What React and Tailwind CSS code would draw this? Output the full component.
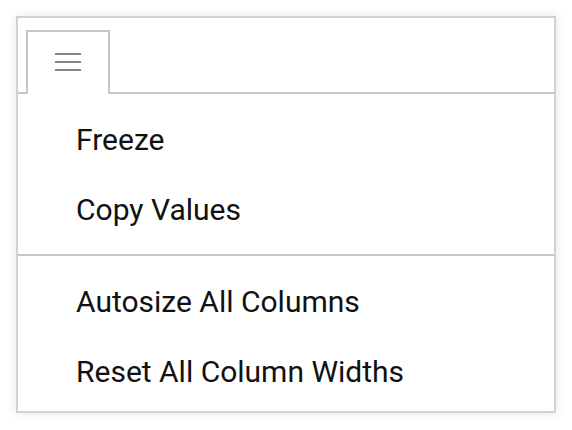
export default function App() {
  const line = 'border-[#c3c7cb]';
  const item = 'h-[70px] flex items-center pl-[58px] text-[30px] text-[#111111]';
  return (
    <div className="w-[572px] h-[430px] bg-white pt-[16px] pl-[16px]" style={{ fontFamily: 'Roboto, "Liberation Sans", sans-serif' }}>
      <div className="w-[540px] h-[397px] border-2 border-[#d2d2d2] bg-white shadow-[0_0_10px_rgba(0,0,0,0.1)] flex flex-col">
        {/* tab strip */}
        <div className={`flex pl-[8px] pt-[12px] border-b-2 ${line}`}>
          <div className={`w-[84px] h-[64px] -mb-[2px] border-2 border-b-0 ${line} bg-white flex flex-col items-center gap-[6px] pt-[21px]`}>
            <div className="w-[26px] h-[2px] bg-[#868686]" />
            <div className="w-[26px] h-[2px] bg-[#868686]" />
            <div className="w-[26px] h-[2px] bg-[#868686]" />
          </div>
        </div>

        <div className={`pt-[10px] pb-[10px] border-b-2 ${line}`}>
          <div className={item}>Freeze</div>
          <div className={item}>Copy Values</div>
        </div>

        <div className="pt-[10px]">
          <div className={item}>Autosize All Columns</div>
          <div className={item}>Reset All Column Widths</div>
        </div>
      </div>
    </div>
  );
}
